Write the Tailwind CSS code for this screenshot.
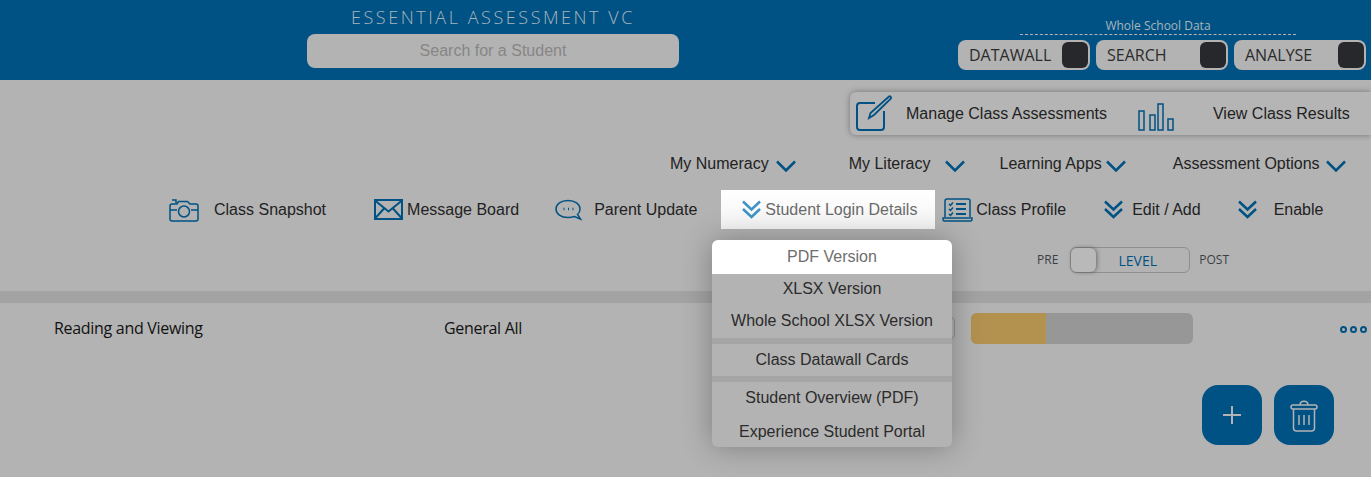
<!DOCTYPE html>
<html lang="en">
<head>
    <meta charset="UTF-8">
    <title>Essential Assessment</title>
    <script src="https://cdn.jsdelivr.net/npm/@tailwindcss/browser@4"></script>
</head>
<body class="h-[477px] w-[1371px] overflow-hidden relative bg-[#b3b3b3] text-[#222] text-[16px] font-['Liberation_Sans',Arial,sans-serif]">

    <!-- top bar -->
    <header class="h-[80px] bg-[#005284] flex">
        <div class="ml-[307px] w-[372px] flex flex-col items-center">
            <div class="mt-[5px] h-[24px] leading-[24px] text-[18px] tracking-[2.55px] font-light text-[#a9b5bd] font-['Open_Sans',sans-serif] whitespace-nowrap">ESSENTIAL ASSESSMENT VC</div>
            <div class="mt-[5px] w-full h-[34px] rounded-lg bg-[#b3b3b3] text-center leading-[34px] text-[#868686]">Search for a Student</div>
        </div>
        <div class="ml-[279px] w-[408px] flex flex-col font-['Open_Sans',sans-serif]">
            <div class="mt-[18px] ml-[62px] w-[276px] h-[17px] border-b border-dashed border-[#b3b3b3] text-center text-[12px] leading-[16px] text-[#a9b5bd]">Whole School Data</div>
            <div class="mt-[5px] flex gap-[6px]">
                <div class="w-[132px] h-[30px] rounded-lg bg-[#b3b3b3] flex items-center justify-between pl-[11px] pr-[2px]">
                    <span class="leading-[30px] text-[#2b2b2b]">DATAWALL</span>
                    <span class="w-[26px] h-[26px] rounded-md bg-[#26282c]"></span>
                </div>
                <div class="w-[132px] h-[30px] rounded-lg bg-[#b3b3b3] flex items-center justify-between pl-[11px] pr-[2px]">
                    <span class="leading-[30px] text-[#2b2b2b]">SEARCH</span>
                    <span class="w-[26px] h-[26px] rounded-md bg-[#26282c]"></span>
                </div>
                <div class="w-[132px] h-[30px] rounded-lg bg-[#b3b3b3] flex items-center justify-between pl-[11px] pr-[2px]">
                    <span class="leading-[30px] text-[#2b2b2b]">ANALYSE</span>
                    <span class="w-[26px] h-[26px] rounded-md bg-[#26282c]"></span>
                </div>
            </div>
        </div>
    </header>

    <!-- class assessments panel -->
    <div class="mt-[12px] ml-[850px] w-[521px] h-[43px] rounded-l-md bg-[#b5b5b5] shadow-[0_0_6px_rgba(0,0,0,0.35)] flex items-center">
        <svg class="ml-[3px] w-[40px] h-[40px]" viewBox="0 0 40 40" fill="none" stroke="#005284" stroke-width="2">
            <path d="M22 9H7a3 3 0 0 0-3 3v21a3 3 0 0 0 3 3h21a3 3 0 0 0 3-3V17"/>
            <path d="M16 24l1.5-5L36 2.5c1-.8 2.600.8 2 2L21 21z" stroke-width="1.800"/>
        </svg>
        <span class="ml-[13px] whitespace-nowrap">Manage Class Assessments</span>
        <svg class="ml-[31px] w-[36px] h-[28px] mt-[6px]" viewBox="0 0 36 28" fill="none" stroke="#005284" stroke-width="1.500">
            <path d="M1 8h5v19H1zM12 12h5v15h-5zM20 1h5v26h-5zM30 16h5v11h-5z"/>
        </svg>
        <span class="ml-[39px] whitespace-nowrap">View Class Results</span>
    </div>

    <!-- menu row -->
    <div class="mt-[17px] h-[24px] flex items-center leading-[24px] whitespace-nowrap">
        <span class="ml-[670px]">My Numeracy</span>
        <svg class="ml-[7px] w-[20px] h-[12px] mt-[3px]" viewBox="0 0 20 12" fill="none" stroke="#005284" stroke-width="2.500"><path d="M1 1.500l9 9 9-9"/></svg>
        <span class="ml-[53px]">My Literacy</span>
        <svg class="ml-[15px] w-[20px] h-[12px] mt-[3px]" viewBox="0 0 20 12" fill="none" stroke="#005284" stroke-width="2.500"><path d="M1 1.500l9 9 9-9"/></svg>
        <span class="ml-[34px]">Learning Apps</span>
        <svg class="ml-[4px] w-[20px] h-[12px] mt-[3px]" viewBox="0 0 20 12" fill="none" stroke="#005284" stroke-width="2.500"><path d="M1 1.500l9 9 9-9"/></svg>
        <span class="ml-[47px]">Assessment Options</span>
        <svg class="ml-[6px] w-[20px] h-[12px] mt-[3px]" viewBox="0 0 20 12" fill="none" stroke="#005284" stroke-width="2.500"><path d="M1 1.500l9 9 9-9"/></svg>
    </div>

    <!-- action row -->
    <div class="mt-[14px] h-[39px] flex items-center whitespace-nowrap">
        <svg class="ml-[169px] w-[30px] h-[24px]" viewBox="0 0 30 24" fill="none" stroke="#005284" stroke-width="1.500">
            <path d="M3 6h5l1.500-2.500h9L21 6h6a2 2 0 0 1 2 2v13a2 2 0 0 1-2 2H3a2 2 0 0 1-2-2V8a2 2 0 0 1 2-2z"/>
            <path d="M3 2h4v3"/><path d="M1 12h7M22 12h7"/><circle cx="15" cy="13.500" r="5.500"/>
        </svg>
        <span class="ml-[15px]">Class Snapshot</span>
        <svg class="ml-[48px] w-[29px] h-[21px]" viewBox="0 0 29 21" fill="none" stroke="#005284" stroke-width="2">
            <path d="M1 1h27v19H1z"/><path d="M1 1.500l13.500 11L28 1.500M1 19.500l9-10M28 19.500l-9-10"/>
        </svg>
        <span class="ml-[4px]">Message Board</span>
        <svg class="ml-[36px] w-[28px] h-[22px]" viewBox="0 0 28 22" fill="none" stroke="#005284" stroke-width="1.500">
            <path d="M13 1.500c7 0 12 3.500 12 8.500 0 2.500-1 4.200-2.500 5.500l3 4.500-6-2.500c-2 .7-4 1-6.500 1C6 18.500 1 15 1 10s5-8.500 12-8.500z"/>
            <path d="M8.500 10h1M13 10h1M17.500 10h1" stroke-width="2.500"/>
        </svg>
        <span class="ml-[11px]">Parent Update</span>
        <div class="ml-[24px] w-[214px] h-[39px] bg-gradient-to-b from-white to-[#f4f4f4] flex items-center text-[#6a6a6a]">
            <svg class="ml-[21px] w-[19px] h-[19px]" viewBox="0 0 19 19" fill="none" stroke="#3f93c6" stroke-width="2.500"><path d="M1 1.500l8.500 8 8.500-8M1 9l8.500 8 8.500-8"/></svg>
            <span class="ml-[4px]">Student Login Details</span>
        </div>
        <svg class="ml-[7px] w-[31px] h-[24px]" viewBox="0 0 31 24" fill="none" stroke="#005284" stroke-width="1.500">
            <path d="M3 19V3a2 2 0 0 1 2-2h21a2 2 0 0 1 2 2v16"/>
            <path d="M1 20h29v1.500a1.500 1.500 0 0 1-1.500 1.500h-26A1.500 1.500 0 0 1 1 21.500z"/>
            <path d="M14 6h10M14 11h10M14 16h10" stroke-width="2"/>
            <path d="M7 6l1.500 1.500L11 4.500M7 11l1.500 1.500L11 9.500M7 16l1.500 1.500L11 14.500"/>
        </svg>
        <span class="ml-[3px]">Class Profile</span>
        <svg class="ml-[38px] w-[19px] h-[19px]" viewBox="0 0 19 19" fill="none" stroke="#005284" stroke-width="2.500"><path d="M1 1.500l8.500 8 8.500-8M1 9l8.500 8 8.500-8"/></svg>
        <span class="ml-[9px]">Edit / Add</span>
        <svg class="ml-[37px] w-[19px] h-[19px]" viewBox="0 0 19 19" fill="none" stroke="#005284" stroke-width="2.500"><path d="M1 1.500l8.500 8 8.500-8M1 9l8.500 8 8.500-8"/></svg>
        <span class="ml-[17px]">Enable</span>
    </div>

    <!-- pre / post toggle -->
    <div class="mt-[18px] h-[26px] flex items-center font-['Open_Sans',sans-serif] text-[12px] text-[#3a3f44] whitespace-nowrap">
        <span class="ml-[1037px]">PRE</span>
        <div class="ml-[12px] w-[120px] h-[26px] rounded-md border border-[#8e8e8e] flex items-center relative">
            <span class="absolute left-0 top-0 w-[25px] h-[24px] rounded-md bg-[#b9b9b9] shadow-[1px_0_4px_rgba(0,0,0,0.4)]"></span>
            <span class="w-full pl-[15px] text-center text-[14px] text-[#005284]">LEVEL</span>
        </div>
        <span class="ml-[9px]">POST</span>
    </div>

    <!-- strip -->
    <div class="mt-[18px] h-[12px] bg-[#a3a3a3]"></div>

    <!-- assessment row -->
    <div class="mt-[9px] h-[32px] flex items-center font-['Open_Sans',sans-serif] text-[#111] whitespace-nowrap">
        <span class="ml-[54px] w-[390px] text-[16px] tracking-[-0.3px]">Reading and Viewing</span>
        <span class="w-[268px] text-[16px] tracking-[-0.3px]">General All</span>
        <div class="w-[243px] h-[24px] rounded-md border border-[#8e8e8e]"></div>
        <div class="ml-[16px] w-[222px] h-[31px] rounded-md bg-[#979797] overflow-hidden">
            <div class="w-[75px] h-full bg-[#b3914f]"></div>
        </div>
        <div class="ml-[147px] flex gap-[3px] mt-[2px]">
            <span class="w-[7px] h-[7px] rounded-full border-2 border-[#005284]"></span>
            <span class="w-[7px] h-[7px] rounded-full border-2 border-[#005284]"></span>
            <span class="w-[7px] h-[7px] rounded-full border-2 border-[#005284]"></span>
        </div>
    </div>

    <!-- add / delete -->
    <div class="mt-[41px] ml-[1202px] flex gap-[12px]">
        <div class="w-[60px] h-[60px] rounded-2xl bg-[#005284] flex items-center justify-center">
            <svg class="w-[18px] h-[18px]" viewBox="0 0 18 18" stroke="#b3b3b3" stroke-width="2"><path d="M9 0v18M0 9h18"/></svg>
        </div>
        <div class="w-[60px] h-[60px] rounded-2xl bg-[#005284] flex items-center justify-center">
            <svg class="w-[28px] h-[34px]" viewBox="0 0 28 34" fill="none" stroke="#b3b3b3" stroke-width="1.500">
                <path d="M3 7h22a2 2 0 0 1 2 2v0a2 2 0 0 1-2 2H3a2 2 0 0 1-2-2v0a2 2 0 0 1 2-2zM10 7c0-5 8-5 8 0"/>
                <path d="M3.500 11v19a3 3 0 0 0 3 3h15a3 3 0 0 0 3-3V11"/>
                <path d="M9 17v10M14 17v10M19 17v10"/>
            </svg>
        </div>
    </div>

    <!-- dropdown over the content -->
    <div class="absolute left-[712px] top-[240px] w-[240px] h-[207px] rounded-md bg-[#a5a5a5] overflow-hidden shadow-[0_0_30px_rgba(0,0,0,0.3)] text-center whitespace-nowrap">
        <div class="h-[34px] leading-[33px] bg-white text-[#6e6e6e]">PDF Version</div>
        <div class="h-[64px] bg-[#b3b3b3] text-[#2b2b2b]">
            <div class="h-[32px] leading-[29px]">XLSX Version</div>
            <div class="h-[32px] leading-[29px]">Whole School XLSX Version</div>
        </div>
        <div class="mt-[6px] h-[32px] leading-[31px] bg-[#b3b3b3] text-[#2b2b2b]">Class Datawall Cards</div>
        <div class="mt-[6px] h-[65px] bg-[#b3b3b3] text-[#2b2b2b]">
            <div class="h-[33px] leading-[31px]">Student Overview (PDF)</div>
            <div class="h-[32px] leading-[33px]">Experience Student Portal</div>
        </div>
    </div>
</body>
</html>
